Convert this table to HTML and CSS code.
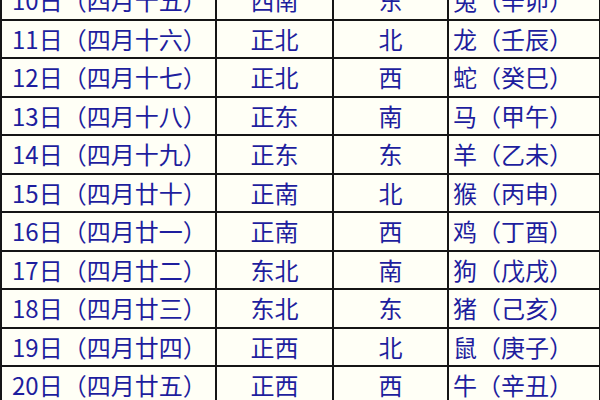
FILE: index.html
```html
<!DOCTYPE html>
<html lang="zh">
<head>
<meta charset="utf-8">
<link rel="stylesheet" href="styles.css">
</head>
<body>
<div class="sheet">
<table class="grid">
<colgroup><col class="c1"><col class="c2"><col class="c3"><col class="c4"></colgroup>
<tbody>
<tr><td class="day">10日（四月十五）</td><td class="mid">西南</td><td class="mid">东</td><td class="zod">兔（辛卯）</td></tr>
<tr><td class="day">11日（四月十六）</td><td class="mid">正北</td><td class="mid">北</td><td class="zod">龙（壬辰）</td></tr>
<tr><td class="day">12日（四月十七）</td><td class="mid">正北</td><td class="mid">西</td><td class="zod">蛇（癸巳）</td></tr>
<tr><td class="day">13日（四月十八）</td><td class="mid">正东</td><td class="mid">南</td><td class="zod">马（甲午）</td></tr>
<tr><td class="day">14日（四月十九）</td><td class="mid">正东</td><td class="mid">东</td><td class="zod">羊（乙未）</td></tr>
<tr><td class="day">15日（四月廿十）</td><td class="mid">正南</td><td class="mid">北</td><td class="zod">猴（丙申）</td></tr>
<tr><td class="day">16日（四月廿一）</td><td class="mid">正南</td><td class="mid">西</td><td class="zod">鸡（丁酉）</td></tr>
<tr><td class="day">17日（四月廿二）</td><td class="mid">东北</td><td class="mid">南</td><td class="zod">狗（戊戌）</td></tr>
<tr><td class="day">18日（四月廿三）</td><td class="mid">东北</td><td class="mid">东</td><td class="zod">猪（己亥）</td></tr>
<tr><td class="day">19日（四月廿四）</td><td class="mid">正西</td><td class="mid">北</td><td class="zod">鼠（庚子）</td></tr>
<tr><td class="day">20日（四月廿五）</td><td class="mid">正西</td><td class="mid">西</td><td class="zod">牛（辛丑）</td></tr>
<tr><td class="day">21日（四月廿六）</td><td class="mid">西北</td><td class="mid">南</td><td class="zod">虎（壬寅）</td></tr>
</tbody>
</table>
</div>
</body>
</html>
```
FILE: styles.css
```css
html, body {
  margin: 0;
  padding: 0;
  background: #fffff6;
  overflow: hidden;
}
.sheet {
  width: 600px;
  height: 400px;
  overflow: hidden;
}
.grid {
  margin-top: -20px;
  border-collapse: collapse;
  table-layout: fixed;
  width: 599px;
  font-family: "Noto Sans CJK SC", "Noto Sans", sans-serif;
  font-size: 24px;
  color: #1e1e9e;
}
.c1 { width: 215px; }
.c2 { width: 117px; }
.c3 { width: 115px; }
.c4 { width: 152px; }
.grid td {
  border: 2px solid #151515;
  height: 38.5px;
  padding: 0;
  box-sizing: border-box;
  line-height: 28px;
  white-space: nowrap;
  overflow: hidden;
}
.day { padding-left: 10px !important; }
.mid { text-align: center; }
.zod { padding-left: 4px !important; }
```
